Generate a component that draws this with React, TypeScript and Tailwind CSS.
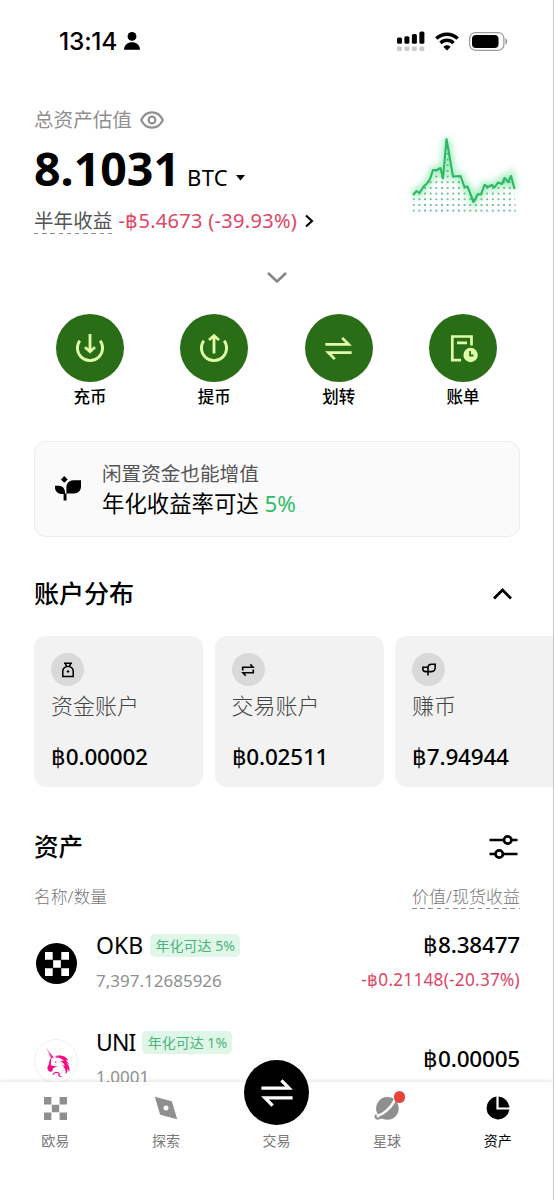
import type { ReactNode } from "react";

const CHART_LINE =
    "13,70 16.5,66 19.5,68 24,61 27,58.5 30,54 33,45 37,45 40.5,43 43,53.5 46.5,14 53,51.5 60.5,51 64.5,62 67.5,61.5 73.5,77 78,69 81,69.5 84.5,60 88,62 92,60 94.5,62.5 98,57.5 102,59 104.5,53 108,57 111,51 114.5,64";

function ProfitChart() {
    return (
        <svg width="130" height="100" viewBox="0 0 130 100" fill="none">
            <defs>
                <pattern id="dots" x="12.8" y="50.6" width="5.65" height="5.68" patternUnits="userSpaceOnUse">
                    <circle cx="0.9" cy="0.9" r="0.9" fill="#2fa36a" />
                </pattern>
                <filter id="glow" x="-20%" y="-30%" width="140%" height="160%">
                    <feGaussianBlur stdDeviation="3.2" />
                </filter>
            </defs>
            <polyline points={CHART_LINE} stroke="#6fe39b" strokeWidth="7" opacity="0.6" filter="url(#glow)" />
            <polygon points={`${CHART_LINE} 116,87.5 12.5,87.5`} fill="url(#dots)" />
            <polyline points={CHART_LINE} stroke="#2db765" strokeWidth="2.1" strokeLinejoin="round" />
        </svg>
    );
}

function SwapIcon({ size }: { size: number }) {
    return (
        <svg width={size} height={size} viewBox="0 0 32 32" fill="none" stroke="currentColor" strokeWidth="3.3">
            <path d="M0.4 11.2H28L20.4 3.4M31.6 20.8H4L11.6 28.6" />
        </svg>
    );
}

function DepositIcon() {
    return (
        <svg width="30" height="32" viewBox="0 0 30 32" fill="none" stroke="currentColor" strokeWidth="2.8">
            <path d="M4.8 8.6A12.6 12.6 0 1 0 25.2 8.6" />
            <path d="M15 2v17.5M10 15.2l5 4.4 5-4.4" />
        </svg>
    );
}

function WithdrawIcon() {
    return (
        <svg width="30" height="32" viewBox="0 0 30 32" fill="none" stroke="currentColor" strokeWidth="2.8">
            <path d="M4.8 8.6A12.6 12.6 0 1 0 25.2 8.6" />
            <path d="M15 21.4V3.6M10 8l5-4.4 5 4.4" />
        </svg>
    );
}

function BillIcon() {
    return (
        <svg width="30" height="30" viewBox="0 0 30 30" fill="none" stroke="currentColor" strokeWidth="2.7">
            <path d="M13 27.2H4.3V3.5h19.2v9M9 9.8h10" />
            <circle cx="22.6" cy="22" r="7.2" fill="currentColor" stroke="none" />
            <path d="M22.1 18v4.5h3.4" stroke="#296d16" strokeWidth="1.8" />
        </svg>
    );
}

function Checker({ size }: { size: number }) {
    return (
        <svg width={size} height={size} viewBox="0 0 24 24" fill="currentColor">
            <path d="M0 0h7.7v7.7H0zM16.3 0H24v7.7h-7.7zM8.15 8.15h7.7v7.7h-7.7zM0 16.3h7.7V24H0zM16.3 16.3H24V24h-7.7z" />
        </svg>
    );
}

function Unicorn() {
    return (
        <svg width="42" height="42" viewBox="0 0 126 126" fill="#f50a84" className="shrink-0">
            <path d="M32 22L56 51 51 53 44 43 40 42 42 39z" fill="#f772b2" />
            <path d="M41 40l16 14-9-1z" />
            <path d="M50 50c-6 8-8 17-9 25l-4 7c0 8 4 12 9 14l6-3 2-8 7-3 6-4-8 1-8-4-3-9c0-7 2-11 2-16z" />
            <path d="M50 61l5-5 8 0 6 8-2 9-8 5-7 0-5-5z" fill="#fff" />
            <path d="M62 48c20-5 33 3 38 14l-8-3 12 15-11-7c9 8 12 18 10 28l-6-9c1 6 0 12-5 17 1-11-2-20-11-28l8 3c-1-8-8-12-15-15l12 0c-5-8-14-12-24-9z" />
            <path d="M62 50c8 0 15 5 17 13M78 68c8 6 9 14 6 23-2 5-6 8-11 11" fill="none" stroke="#f9a5cc" strokeWidth="1.6" />
            <path d="M52 103c5-9 18-11 24-1l-7-2c-5-2-10-1-14 4zM74 102c-1 6 5 9 10 6-7 7-17 1-14-7z" />
            <circle cx="62" cy="66" r="2.4" />
        </svg>
    );
}

function Action({ label, children }: { label: string; children: ReactNode }) {
    return (
        <div className="flex w-[68px] flex-col items-center">
            <div className="flex h-[68px] w-[68px] items-center justify-center rounded-full bg-[#296d16] text-[#e0fda8]">
                {children}
            </div>
            <span className="mt-[3px] text-[16.5px] leading-6 font-medium">{label}</span>
        </div>
    );
}

function AccountCard({ label, amount, children }: { label: string; amount: string; children: ReactNode }) {
    return (
        <div className="h-[151px] w-[169px] shrink-0 rounded-xl bg-[#f2f2f2] pt-[17px] pl-[17px]">
            <div className="flex h-[33px] w-[33px] items-center justify-center rounded-full bg-[#d9d9d9]">{children}</div>
            <div className="mt-[4px] text-[22px] leading-[30px] font-light text-[#444]">{label}</div>
            <div className="mt-[22px] text-[22.5px] leading-[30px] font-medium tracking-[-0.2px]">{amount}</div>
        </div>
    );
}

function Badge({ children }: { children: ReactNode }) {
    return (
        <span className="flex h-[23px] w-[90px] items-center justify-center rounded-[5px] bg-[#dff6e8] text-[14px] tracking-normal whitespace-pre text-[#4bb57b]">
            {children}
        </span>
    );
}

function DashedLine() {
    return (
        <span className="absolute bottom-0 left-0 h-[1.5px] w-full bg-[repeating-linear-gradient(90deg,#8f8f8f_0_4.5px,transparent_4.5px_8.2px)]" />
    );
}

function NavItem({ label, active, children }: { label: string; active?: boolean; children: ReactNode }) {
    return (
        <div className={`flex flex-1 flex-col items-center pt-[14px] ${active ? "text-black" : "text-[#8f8f8f]"}`}>
            <div className="flex h-6 items-center justify-center">{children}</div>
            <span className={`mt-[11px] text-[14px] leading-5 ${active ? "text-black" : "text-[#777]"}`}>{label}</span>
        </div>
    );
}

export default function App() {
    return (
        <div className="flex h-[1200px] w-[554px] flex-col overflow-hidden border-r border-[#c8c8c8] bg-white font-['Noto_Sans','Noto_Sans_CJK_SC',sans-serif] text-black">
            <main className="h-[1082px] overflow-hidden">
                <div className="mb-[2px] flex h-[82px] items-center justify-between pr-[45px] pl-[59px]">
                    <div className="flex items-center gap-[7px]">
                        <span className="font-['Inter',sans-serif] text-[24.5px] font-medium tracking-[-0.2px]">13:14</span>
                        <svg width="16" height="18" viewBox="0 0 16 18">
                            <circle cx="8" cy="4.4" r="4.4" />
                            <path d="M0 17.8c0-10 16-10 16 0z" />
                        </svg>
                    </div>
                    <div className="flex items-center">
                        <svg width="28" height="20" viewBox="0 0 28 20">
                            <rect x="0" y="6.6" width="5" height="6.2" rx="1.6" />
                            <rect x="7.4" y="5.2" width="5" height="7.6" rx="1.6" />
                            <rect x="14.9" y="3" width="5" height="9.8" rx="1.6" />
                            <rect x="22.4" y="0.6" width="5" height="12.2" rx="1.6" />
                            <g fill="#cbcbcb">
                                <rect x="0" y="15.4" width="5" height="4.6" rx="1.2" />
                                <rect x="7.4" y="15.4" width="5" height="4.6" rx="1.2" />
                                <rect x="14.9" y="15.4" width="5" height="4.6" rx="1.2" />
                                <rect x="22.4" y="15.4" width="5" height="4.6" rx="1.2" />
                            </g>
                        </svg>
                        <svg className="ml-[10px]" width="24" height="19" viewBox="0 0 24 19" fill="none" stroke="black" strokeWidth="3.5">
                            <path d="M1.3 6.5C7.4 .7 16.6 .7 22.7 6.5M5.5 11.1C9.2 7.4 14.8 7.4 18.5 11.1" />
                            <path d="M8.3 14.8c2.1-2.1 5.3-2.1 7.4 0L12 18.6z" fill="black" stroke="none" />
                        </svg>
                        <svg className="ml-[10px]" width="39" height="19" viewBox="0 0 39 19">
                            <rect x="0.7" y="0.7" width="34.2" height="17.6" rx="5.6" fill="none" stroke="#9c9c9c" strokeWidth="1.3" />
                            <rect x="3" y="2.9" width="26.5" height="13.2" rx="4" />
                            <path d="M36.5 6.3c2.2.8 2.2 5.4 0 6.2z" fill="#8c8c8c" />
                        </svg>
                    </div>
                </div>

                <div className="flex h-[151px] justify-between pr-[23px] pl-[34px]">
                    <div className="pt-[21px]">
                        <div className="flex h-[30px] items-center text-[19.6px] text-[#8f8f8f]">
                            总资产估值
                            <svg className="ml-[8px]" width="24" height="18" viewBox="0 0 24 18" fill="none" stroke="currentColor" strokeWidth="2.1">
                                <path d="M1.2 9C6 -1.2 18 -1.2 22.8 9 18 19.2 6 19.2 1.2 9z" />
                                <circle cx="12" cy="9" r="3.4" />
                            </svg>
                        </div>
                        <div className="flex h-[68px] items-baseline">
                            <span className="text-[46.5px] leading-[66px] font-bold">8.1031</span>
                            <span className="ml-[7px] text-[22px] tracking-[0.3px]">BTC</span>
                            <svg className="ml-[8px] translate-y-[9px] self-center" width="10" height="6" viewBox="0 0 10 6">
                                <path d="M0 0h9L4.5 5.4z" />
                            </svg>
                        </div>
                        <div className="flex h-[35px] items-center text-[19.6px]">
                            <span className="relative flex h-[27px] items-center text-[#555]">
                                半年收益
                                <DashedLine />
                            </span>
                            <span className="ml-[6px] text-[20px] tracking-[0.3px] text-[#dd4665]">-฿5.4673 (-39.93%)</span>
                            <svg className="ml-[8px]" width="9" height="14" viewBox="0 0 9 14" fill="none" stroke="black" strokeWidth="2.1">
                                <path d="M1 1.4L7 7 1 12.6" />
                            </svg>
                        </div>
                    </div>
                    <div className="pt-[41px]">
                        <ProfitChart />
                    </div>
                </div>

                <div className="mt-[37px] flex h-[11px] justify-center">
                    <svg width="20" height="11" viewBox="0 0 20 11" fill="none" stroke="#858585" strokeWidth="2.6">
                        <path d="M1 1l9 8.4L19 1" />
                    </svg>
                </div>

                <div className="mt-[31px] flex justify-between px-[56px]">
                    <Action label="充币"><DepositIcon /></Action>
                    <Action label="提币"><WithdrawIcon /></Action>
                    <Action label="划转"><SwapIcon size={27} /></Action>
                    <Action label="账单"><BillIcon /></Action>
                </div>

                <div className="mt-[32px] mr-[33px] ml-[34px] flex h-[96px] items-center rounded-xl border border-[#ececec] bg-[#fafafa] pl-[20px]">
                    <svg className="-mt-[2px]" width="26" height="25" viewBox="0 0 26 25">
                        <path d="M9.3 0l3.4 3.4-3.4 3.4-3.4-3.4zM0 9.8h3.4c4 0 6.6 2.8 6.6 6.4V18H6.6C2.6 18 0 15.2 0 11.6zM26 4.2v6.3c0 4.1-2.9 7-7 7h-7.6v-6.3c0-4.1 2.9-7 7-7zM8.6 17.5h2.9v7H8.6z" />
                    </svg>
                    <div className="-mt-px ml-[21px]">
                        <div className="text-[19.6px] leading-[30px] text-[#555]">闲置资金也能增值</div>
                        <div className="text-[22.4px] leading-[29px]">
                            年化收益率可达 <span className="text-[#30bd67]">5%</span>
                        </div>
                    </div>
                </div>

                <div className="mt-[37px] flex h-[40px] items-center justify-between pr-[41px] pl-[34px]">
                    <h2 className="text-[25px] font-medium">账户分布</h2>
                    <svg width="19" height="12" viewBox="0 0 19 12" fill="none" stroke="black" strokeWidth="2.8">
                        <path d="M1 10.6L9.5 2 18 10.6" />
                    </svg>
                </div>

                <div className="mt-[22px] flex gap-[11.5px] overflow-hidden pl-[34px]">
                    <AccountCard label="资金账户" amount="฿0.00002">
                        <svg width="12" height="16" viewBox="0 0 12 16" fill="none" stroke="black" strokeWidth="1.5">
                            <path d="M2 1.2h8M3.2 1.4l1.4 3h2.8l1.4-3M4.2 4.6C2.2 5.4.8 7 .8 9v5.6h10.4V9c0-2-1.4-3.6-3.4-4.4z" />
                            <path d="M6 7.9L7.6 9.5 6 11.1 4.4 9.5z" fill="black" stroke="none" />
                        </svg>
                    </AccountCard>
                    <AccountCard label="交易账户" amount="฿0.02511">
                        <svg width="14" height="14" viewBox="0 0 14 14" fill="none" stroke="black" strokeWidth="1.6">
                            <path d="M1.7 7.4V4.2H12L9.3 1.2M12.3 6.6v3.2H2l2.7 3" />
                        </svg>
                    </AccountCard>
                    <AccountCard label="赚币" amount="฿7.94944">
                        <svg width="14" height="13" viewBox="0 0 14 13" fill="none" stroke="black" strokeWidth="1.6">
                            <path d="M6 9V4.8C6 2.6 7.5 1.3 9.6 1.3h3.6v3.3c0 2.2-1.5 4-3.6 4H3.5C2 8.600.9 7.600.9 6V4.200H6M6 8v4.5" />
                        </svg>
                    </AccountCard>
                </div>

                <div className="mt-[40px] flex h-[40px] items-center justify-between pr-[35px] pl-[34px]">
                    <h2 className="text-[24.5px] font-medium">资产</h2>
                    <svg width="29" height="26" viewBox="0 0 29 26" fill="none" stroke="black" strokeWidth="2.7">
                        <path d="M0.5 6h14M22.5 6h6M0.5 20h6M14 20h14.5" />
                        <circle cx="18.7" cy="6" r="3.7" />
                        <circle cx="10.2" cy="20" r="3.7" />
                    </svg>
                </div>

                <div className="mt-[17px] flex h-[26px] items-center justify-between pr-[33px] pl-[34px] text-[16.8px] font-light text-[#777]">
                    <span>名称/数量</span>
                    <span className="relative flex h-[24px] items-center text-[17px]">
                        价值/现货收益
                        <DashedLine />
                    </span>
                </div>

                <div className="mt-[15px] flex h-[77px] items-center pr-[33px] pl-[36px]">
                    <div className="flex h-[41px] w-[41px] items-center justify-center rounded-full bg-black text-white">
                        <Checker size={24} />
                    </div>
                    <div className="-mt-[3px] ml-[19px]">
                        <div className="flex h-[36px] items-center gap-[7px] text-[23px]">
                            OKB
                            <Badge>年化可达 5%</Badge>
                        </div>
                        <div className="text-[17px] leading-[33px] text-[#8f8f8f]">7,397.12685926</div>
                    </div>
                    <div className="-mt-[4px] ml-auto text-right">
                        <div className="text-[22.5px] leading-[36px] font-medium tracking-[-0.2px]">฿8.38477</div>
                        <div className="text-[17.2px] leading-[34px] tracking-[0.25px] text-[#dd4665]">-฿0.21148(-20.37%)</div>
                    </div>
                </div>

                <div className="mt-[20px] flex h-[78px] items-center pr-[33px] pl-[34px]">
                    <div className="flex h-[44px] w-[44px] items-center justify-center rounded-full border border-[#f1f1f1]">
                        <Unicorn />
                    </div>
                    <div className="-mt-[5px] ml-[18px]">
                        <div className="flex h-[36px] items-center gap-[7px] text-[23px] tracking-[-0.9px]">
                            UNI
                            <Badge>年化可达 1%</Badge>
                        </div>
                        <div className="text-[17px] leading-[32px] text-[#8f8f8f]">1.0001</div>
                    </div>
                    <div className="-mt-[5px] ml-auto text-[22.5px] font-medium tracking-[-0.2px]">฿0.00005</div>
                </div>
            </main>

            <nav className="relative flex h-[118px] bg-white shadow-[0_-1px_4px_rgba(0,0,0,0.12)]">
                <NavItem label="欧易"><Checker size={23} /></NavItem>
                <NavItem label="探索">
                    <svg width="24" height="24" viewBox="0 0 24 24" fill="currentColor" fillRule="evenodd">
                        <path d="M.8.8L17.8 5.2 23.2 23.2 6.2 18.8zM12 9.5a2.5 2.5 0 1 0 0 5 2.5 2.5 0 0 0 0-5z" />
                    </svg>
                </NavItem>
                <NavItem label="交易">
                    <div className="relative">
                        <div className="absolute top-1/2 left-1/2 -mt-[48px] -ml-[32px] flex h-[65px] w-[65px] items-center justify-center rounded-full bg-black pl-px text-white">
                            <SwapIcon size={32} />
                        </div>
                    </div>
                </NavItem>
                <NavItem label="星球">
                    <div className="relative">
                        <svg width="26" height="26" viewBox="0 0 26 26" fill="none">
                            <circle cx="13.4" cy="13.4" r="11.3" fill="currentColor" />
                            <path d="M1 20.8C9 21 18.5 11.5 21.5 3" stroke="white" strokeWidth="2.6" />
                            <path d="M1.8 19.8c-.6 2.7.2 4 2.4 3.7 2-.3 3.6-1 5.2-2.2" stroke="currentColor" strokeWidth="2.2" />
                        </svg>
                        <span className="absolute -top-[4px] -right-[5px] h-[11.5px] w-[11.5px] rounded-full bg-[#e5453d]" />
                    </div>
                </NavItem>
                <NavItem label="资产" active>
                    <svg width="24" height="24" viewBox="0 0 24 24" fill="currentColor">
                        <path d="M10.4.6v13h13A11.5 11.5 0 1 1 10.4.6z" />
                        <path d="M12.6.6A11.5 11.5 0 0 1 23.4 11.4H12.6z" />
                    </svg>
                </NavItem>
            </nav>
        </div>
    );
}
